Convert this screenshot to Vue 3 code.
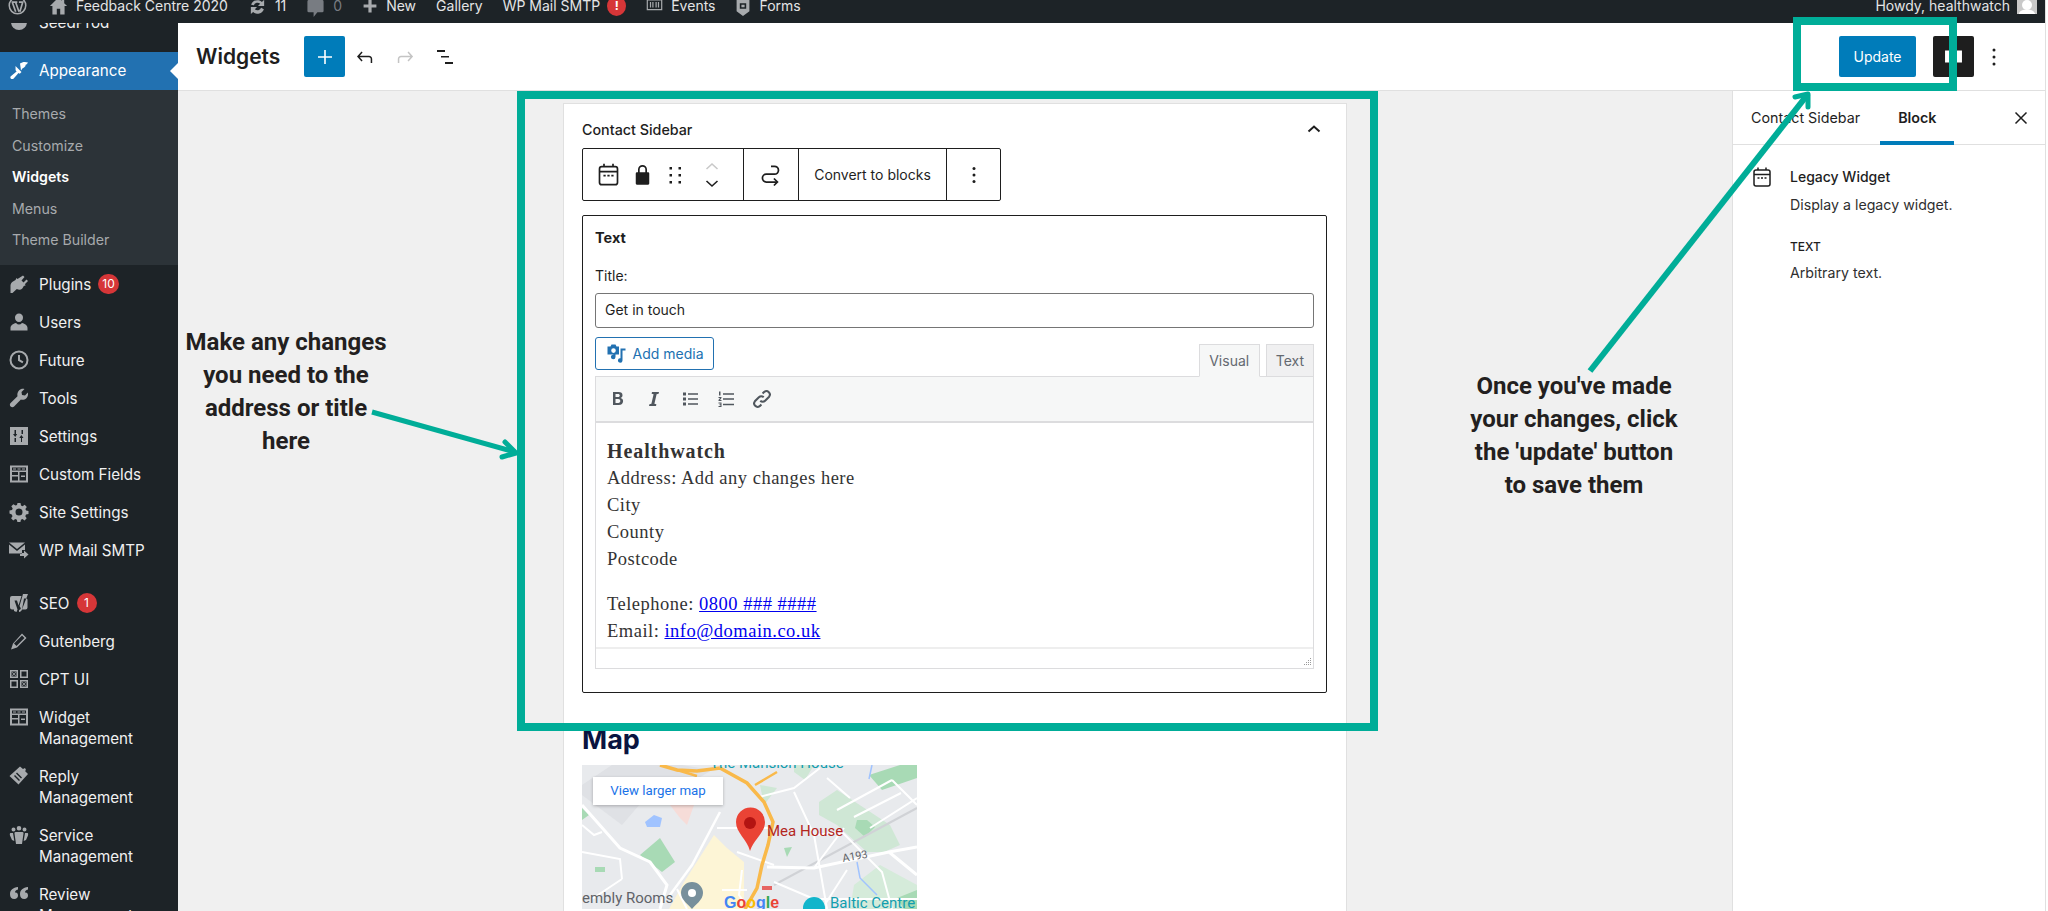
<template>
  <div class="page">
    <!-- 顶部管理栏 -->
    <header class="adminbar">
      <svg class="wp-logo" viewBox="0 0 20 20" fill="none" stroke="#a7aaad"><circle cx="10" cy="10" r="8.7" stroke-width="1.600" /><path d="M4.500 6.500l3.600 10M8 6.500l3.600 10M11.500 6.500h4l-3 10M3.800 6.500h6" stroke-width="1.800" /></svg>
      <div class="bar-item">
        <svg class="bar-ico home" viewBox="0 0 20 20"><path d="M10 1L1 10h2.600v9h4.600v-6h3.600v6h4.600v-9H19l-3-3V2.500h-2.600v2z" /></svg>
        <span>Feedback Centre 2020</span>
      </div>
      <div class="bar-item">
        <svg class="bar-ico sync" viewBox="0 0 20 20"><path d="M10.200 3.300c1.700 0 3.300.7 4.400 1.900L17 3v6.500h-6.500l2.300-2.300a4 4 0 0 0-6.600 1.500L3.300 8.200a7 7 0 0 1 6.900-4.900zM3 10.500h6.500l-2.300 2.300a4 4 0 0 0 6.600-1.500l2.900 1.500a7 7 0 0 1-11.300 3L3 17.800z" /></svg>
        <span>11</span>
      </div>
      <div class="bar-item muted">
        <svg class="bar-ico comment" viewBox="0 0 20 20"><path d="M3 1h14a1.500 1.500 0 0 1 1.500 1.500v10A1.500 1.500 0 0 1 17 14h-5l-4 5v-5H3a1.500 1.500 0 0 1-1.500-1.500v-10A1.500 1.500 0 0 1 3 1z" /></svg>
        <span>0</span>
      </div>
      <div class="bar-item">
        <svg class="bar-ico plus" viewBox="0 0 20 20"><path d="M8 2h4v6h6v4h-6v6H8v-6H2V8h6z" /></svg>
        <span>New</span>
      </div>
      <div class="bar-item"><span>Gallery</span></div>
      <div class="bar-item">
        <span>WP Mail SMTP</span>
        <b class="bar-alert">!</b>
      </div>
      <div class="bar-item">
        <svg class="bar-ico events" viewBox="0 0 20 20" fill="none" stroke="#a7aaad" stroke-width="1.500"><path d="M1 2.500h18v12H1zM5 5v7M8 5v7M12 5v7M15 5v7" /></svg>
        <span>Events</span>
      </div>
      <div class="bar-item">
        <svg class="bar-ico forms" viewBox="0 0 20 20"><path fill-rule="evenodd" d="M2 0h16v14l-8 6-8-6zM6 4v7h8V4zm2 2h4v3H8z" /></svg>
        <span>Forms</span>
      </div>
      <div class="howdy">
        <span>Howdy, healthwatch</span>
        <svg class="avatar" viewBox="0 0 20 14"><rect width="20" height="14" fill="#c9c9c9" /><circle cx="10" cy="5" r="5" fill="#fff" /><path d="M1.500 16c0-5 4-6.500 8.500-6.500s8.500 1.500 8.500 6.500z" fill="#fff" /></svg>
      </div>
    </header>

    <div class="main">
      <!-- 左侧菜单 -->
      <aside class="sidebar">
        <div class="menu-row seed">
          <svg class="menu-ico" viewBox="0 0 20 20"><circle cx="10" cy="10" r="8" /></svg>
          <span>SeedProd</span>
        </div>
        <div class="menu-row current">
          <svg class="menu-ico" viewBox="0 0 20 20"><path :d="icons.brush" /></svg>
          <span>Appearance</span>
        </div>
        <div class="submenu">
          <div v-for="s in subItems" :key="s" class="sub-row" :class="{ on: s === 'Widgets' }">{{ s }}</div>
        </div>
        <template v-for="m in menu" :key="m.label">
          <div class="menu-row" :class="{ spaced: m.spaced }">
            <svg class="menu-ico" viewBox="0 0 20 20"><path fill-rule="evenodd" :d="icons[m.icon]" /></svg>
            <span class="menu-label">{{ m.label }}<b v-if="m.badge" class="badge">{{ m.badge }}</b></span>
          </div>
        </template>
      </aside>

      <div class="editor">
        <!-- 编辑器顶栏 -->
        <div class="topbar">
          <h1 class="page-title">Widgets</h1>
          <button class="add-btn">
            <svg viewBox="0 0 24 24" width="24" height="24"><path d="M11.200 5h1.600v6.200H19v1.600h-6.200V19h-1.600v-6.200H5v-1.600h6.200z" fill="#fff" /></svg>
          </button>
          <svg class="tool undo" viewBox="0 0 24 24"><path d="M18.300 11.700c-.6-.6-1.400-.9-2.300-.9H6.700l2.900-3.300-1.100-1-4.500 5 4.500 5 1.100-1-2.900-3.300H16c.5 0 .9.200 1.200.5.300.3.500.7.500 1.200V18h1.500v-4c0-.9-.3-1.700-.9-2.300z" fill="#1e1e1e" /></svg>
          <svg class="tool redo" viewBox="0 0 24 24"><path d="M15.600 6.500l-1.100 1 2.900 3.300H8c-.9 0-1.700.3-2.300.9-.6.6-.9 1.400-.9 2.300v4h1.500v-4c0-.5.200-.9.500-1.200.3-.3.700-.5 1.200-.5h9.400l-2.900 3.300 1.100 1 4.500-5z" fill="#c4c4c4" /></svg>
          <svg class="tool list" viewBox="0 0 24 24"><path d="M4 5h8v2H4zM8 11h8v1.500H8zM12 17h8v2h-8z" fill="#1e1e1e" /></svg>
          <div class="top-right">
            <button class="update-btn">Update</button>
            <button class="settings-btn">
              <svg viewBox="0 0 24 24" width="29" height="29"><path d="M5 7h4l1 2h4l1-2h4v10h-4l-1-2h-4l-1 2H5z" fill="#fff" /></svg>
            </button>
            <svg class="tool kebab" viewBox="0 0 24 24" fill="#1e1e1e"><circle cx="12" cy="5" r="1.500" /><circle cx="12" cy="12" r="1.500" /><circle cx="12" cy="19" r="1.500" /></svg>
          </div>
        </div>

        <div class="workspace">
          <div class="canvas">
            <div class="card">
              <div class="area-head">
                <span>Contact Sidebar</span>
                <svg viewBox="0 0 24 24" width="24" height="24" fill="none" stroke="#1e1e1e" stroke-width="2"><path d="M6.500 14.500L12 9.500l5.500 5" /></svg>
              </div>

              <!-- 块工具栏 -->
              <div class="block-toolbar">
                <div class="tb-group first">
                  <svg class="tb-ico" viewBox="0 0 24 24" fill="none" stroke="#1e1e1e" stroke-width="1.500"><rect x="4" y="5" width="16" height="16" rx="2" /><path d="M4 9.500h16M8 2.500V5M16 2.500V5" /><path d="M7.500 13h2M11 13h2M14.500 13h2" /></svg>
                  <svg class="tb-ico lock" viewBox="0 0 24 24"><path d="M17 10h-1V7.500a4 4 0 0 0-8 0V10H7a1 1 0 0 0-1 1v9a1 1 0 0 0 1 1h10a1 1 0 0 0 1-1v-9a1 1 0 0 0-1-1zm-7.500-2.500a2.500 2.500 0 0 1 5 0V10h-5z" fill="#1e1e1e" /></svg>
                  <svg class="drag" viewBox="0 0 12 18" width="12" height="18" fill="#1e1e1e"><rect x="0.500" y="1" width="2.500" height="2.500" /><rect x="9.500" y="1" width="2.500" height="2.500" /><rect x="0.500" y="8" width="2.500" height="2.500" /><rect x="9.500" y="8" width="2.500" height="2.500" /><rect x="0.500" y="15" width="2.500" height="2.500" /><rect x="9.500" y="15" width="2.500" height="2.500" /></svg>
                  <div class="movers">
                    <svg viewBox="0 0 14 8" width="14" height="8" fill="none" stroke="#c9c9c9" stroke-width="1.600"><path d="M1.500 7L7 2l5.500 5" /></svg>
                    <svg viewBox="0 0 14 8" width="14" height="8" fill="none" stroke="#1e1e1e" stroke-width="1.600"><path d="M1.500 1L7 6l5.500-5" /></svg>
                  </div>
                </div>
                <div class="tb-group transform">
                  <svg viewBox="0 0 24 24" width="28" height="28" fill="none" stroke="#1e1e1e" stroke-width="1.500"><path d="M12 4.500h3a3.200 3.200 0 0 1 0 6.800H8a3.200 3.200 0 0 0 0 6.700h9" /><path d="M14.500 15l3 3-3 3" /></svg>
                </div>
                <div class="tb-group convert">Convert to blocks</div>
                <div class="tb-group more">
                  <svg viewBox="0 0 24 24" width="24" height="24" fill="#1e1e1e"><circle cx="12" cy="5.500" r="1.500" /><circle cx="12" cy="12" r="1.500" /><circle cx="12" cy="18.500" r="1.500" /></svg>
                </div>
              </div>

              <!-- 旧版文本小工具 -->
              <div class="widget-box">
                <div class="widget-name">Text</div>
                <label class="field-label">Title:</label>
                <div class="title-input">Get in touch</div>
                <div class="media-row">
                  <button class="media-btn">
                    <svg viewBox="0 0 20 20" width="20" height="20" fill="#2271b1"><path fill-rule="evenodd" d="M1.500 2.500h3l1-2h4l1 2h2.500v8H9.500v2.500a2.300 2.300 0 1 1-2-2.300V10.500h-6zm6 1.800a2.300 2.300 0 1 0 0 4.600 2.300 2.300 0 0 0 0-4.600z" /><path d="M14.500 4.500h5v2h-3v10a2.300 2.300 0 1 1-2-2.300z" /></svg>
                    Add media
                  </button>
                  <div class="tabs">
                    <div class="tab active">Visual</div>
                    <div class="tab">Text</div>
                  </div>
                </div>
                <div class="mce">
                  <div class="mce-toolbar">
                    <svg viewBox="0 0 20 20" class="mce-ico"><path d="M5 3h5.500c2.700 0 4 1.200 4 3.200 0 1.300-.7 2.300-1.900 2.700 1.500.3 2.500 1.500 2.500 3 0 2.300-1.500 4.100-4.500 4.100H5zm2.500 2.100v3H10c1.200 0 1.800-.6 1.800-1.500S11.200 5.100 10 5.100zm0 5v3.800h2.800c1.400 0 2-.8 2-1.900s-.7-1.900-2.100-1.900z" fill="#50575e" /></svg>
                    <svg viewBox="0 0 20 20" class="mce-ico"><path d="M8 3h7l-.4 1.800-2 .4-2.200 9.600 2 .4L12 17H5l.4-1.800 2-.4 2.200-9.600-2-.4z" fill="#50575e" /></svg>
                    <svg viewBox="0 0 20 20" class="mce-ico"><path d="M3 3.500h3v3H3zM8 4.300h10v1.400H8zM3 8.500h3v3H3zM8 9.300h10v1.400H8zM3 13.500h3v3H3zM8 14.300h10v1.400H8z" fill="#50575e" /></svg>
                    <svg viewBox="0 0 20 20" class="mce-ico"><path d="M3 2.500h1.500v4H3zM7 4.300h11v1.400H7zM2.500 8h3v1l-1.500 2h1.500v1h-3v-1L4 9H2.500zM7 9.300h11v1.400H7zM2.500 13.500h3v4.500h-3v-1h2v-.8h-1v-.9h1v-.8h-2zM7 14.800h11v1.400H7z" fill="#50575e" /></svg>
                    <svg viewBox="0 0 20 20" class="mce-ico link" fill="none" stroke="#50575e" stroke-width="1.800"><path d="M8.500 11.500a3 3 0 0 0 4.200 0l3.500-3.500a3 3 0 0 0-4.200-4.200L10.500 5.300" /><path d="M11.500 8.500a3 3 0 0 0-4.200 0l-3.500 3.500a3 3 0 0 0 4.200 4.200l1.500-1.500" /></svg>
                  </div>
                  <div class="mce-body">
                    <p><strong>Healthwatch</strong></p>
                    <p>Address: Add any changes here</p>
                    <p>City</p>
                    <p>County</p>
                    <p>Postcode</p>
                    <p class="gap">Telephone: <a href="#">0800 ### ####</a></p>
                    <p>Email: <a href="#">info@domain.co.uk</a></p>
                  </div>
                  <div class="mce-status">
                    <svg viewBox="0 0 10 10" width="10" height="10" fill="#9a9a9a"><path d="M8 1h1v1H8zM6 3h1v1H6zM8 3h1v1H8zM4 5h1v1H4zM6 5h1v1H6zM8 5h1v1H8zM2 7h1v1H2zM4 7h1v1H4zM6 7h1v1H6zM8 7h1v1H8z" /></svg>
                  </div>
                </div>
              </div>

              <h2 class="map-title">Map</h2>
              <!-- 地图 -->
              <div class="map">
                <svg viewBox="0 0 335 144" width="335" height="144">
                  <rect width="335" height="144" fill="#e8eaed" />
                  <path d="M132 70L102 117 87 144H162V97L145 83z" fill="#fdf5d6" />
                  <path d="M40 60L70 25 105 20 130 5 100 0H30L0 20V30z" fill="#dfe1e5" />
                  <path d="M237 37L255 25 308 60 318 80 302 87 285 87 255 60 237 50z" fill="#cfe7d5" />
                  <path d="M272 120L298 100 335 120V144H268z" fill="#d5ebda" />
                  <path d="M287 10L318 0h17v13l-35 12z" fill="#a8dab5" />
                  <path d="M212 0h20l-9 15-11-8z" fill="#cfe7d5" />
                  <path d="M178 20l17 3-13 17z" fill="#cfe7d5" />
                  <path d="M58 90L78 73 93 97 80 107z" fill="#a8dab5" />
                  <path d="M0 43l7 7-7 5z" fill="#a8dab5" />
                  <path d="M13 102h10v5H13z" fill="#a8dab5" />
                  <path d="M202 83l8-1-5 10z" fill="#a8dab5" />
                  <path d="M275 55h10l8 7-10 10-10-9z" fill="#a8dab5" />
                  <path d="M315 133l20-8v19h-13z" fill="#a8dab5" />
                  <path d="M63 57l9-7 8 3-2 9H65z" fill="#a0c3ff" />
                  <path d="M88 40h24l-7 20-7-7z" fill="#f6dcd8" />
                  <path d="M275 97l3 16 17 17M290 0l-3 14" fill="none" stroke="#a0c3ff" stroke-width="1.500" />
                  <path d="M192 120L335 43" fill="none" stroke="#d0d2d6" stroke-width="2" />
                  <g fill="none" stroke="#fff" stroke-width="2">
                    <path d="M0 40l38 43 30 14 17 23-7 24" stroke-width="3" />
                    <path d="M138 47l-28 53-22 30" stroke-width="2.500" />
                    <path d="M135 63h52M177 32l35-9 26-20M212 27l20 43 13 74" />
                    <path d="M185 102l47 1 75-16 28-5M307 87l28 23" stroke-width="3" />
                    <path d="M255 45l55-30M272 52l47-24M288 63l47-30M245 13l23 20M310 15l25 25" />
                    <path d="M155 87l37 13M192 117l40 17h103M160 105l-3 25 10 14M140 125h25" />
                    <path d="M0 87l38 7 2 20M40 114l-30 20M0 60l12 10 8-3M105 144l-10-20" />
                    <path d="M232 70l28-3 40 40 10 37M265 105l-25 39M232 103l30-40" />
                  </g>
                  <path d="M78 0l17 5 20 1 23-3 27 15 17 19 9 20-5 23-6 20-5 23-12 21" fill="none" stroke="#f9b94a" stroke-width="3.500" />
                  <path d="M173 20l22-13M95 5l20 6" fill="none" stroke="#f9b94a" stroke-width="2.500" />
                  <text x="128" y="3" class="m-teal">The Mansion House</text>
                  <path d="M168 86c-3-12-14-18-14-29a14.500 14.500 0 0 1 29 0c0 11-11 17-15 29z" fill="#ea4335" />
                  <circle cx="168" cy="58" r="6" fill="#b31412" />
                  <text x="185" y="71" class="m-red">Mea House</text>
                  <text x="260" y="95" class="m-road" transform="rotate(-10 272 91)">A193</text>
                  <text x="0" y="138" class="m-grey">embly Rooms</text>
                  <path d="M110 144c-3-4-11-9-11-16a11 11 0 0 1 22 0c0 7-8 12-11 16z" fill="#78909c" />
                  <circle cx="110" cy="128" r="4" fill="#fff" />
                  <text x="142" y="143" class="m-google"><tspan fill="#4285f4">G</tspan><tspan fill="#ea4335">o</tspan><tspan fill="#fbbc05">o</tspan><tspan fill="#4285f4">g</tspan><tspan fill="#34a853">l</tspan><tspan fill="#ea4335">e</tspan></text>
                  <path d="M180 122h10M180 124h10" stroke="#e53935" stroke-width="1.500" />
                  <circle cx="232" cy="143" r="11" fill="#12b5cb" />
                  <text x="248" y="143" class="m-baltic">Baltic Centre</text>
                </svg>
                <div class="map-link">View larger map</div>
              </div>
            </div>
          </div>

          <!-- 右侧面板 -->
          <aside class="inspector">
            <div class="ins-tabs">
              <div class="ins-tab">Contact Sidebar</div>
              <div class="ins-tab selected">Block</div>
              <svg class="ins-close" viewBox="0 0 24 24" width="24" height="24" fill="none" stroke="#1e1e1e" stroke-width="1.500"><path d="M6.500 6.500l11 11M17.500 6.500l-11 11" /></svg>
            </div>
            <div class="ins-body">
              <svg class="ins-ico" viewBox="0 0 24 24" fill="none" stroke="#1e1e1e" stroke-width="1.500"><rect x="4" y="5" width="16" height="16" rx="2" /><path d="M4 9.500h16M8 2.500V5M16 2.500V5" /><path d="M7.500 13h2M11 13h2M14.500 13h2" /></svg>
              <div class="ins-text">
                <div class="ins-title">Legacy Widget</div>
                <div class="ins-desc">Display a legacy widget.</div>
                <div class="ins-caps">TEXT</div>
                <div class="ins-desc">Arbitrary text.</div>
              </div>
            </div>
          </aside>
        </div>
      </div>
    </div>

    <!-- 标注层 -->
    <svg class="marks" viewBox="0 0 2048 911" fill="none" stroke="#00ad98" stroke-width="8">
      <rect x="521" y="95" width="853" height="632" />
      <rect x="1797" y="21" width="156" height="66" />
      <path d="M372 412L515 452" stroke-width="5" />
      <path d="M505 442l11 11-14 4" stroke-width="5" stroke-linecap="round" stroke-linejoin="round" />
      <path d="M1590 371L1808 94" stroke-width="6" />
      <path d="M1795 97l13-3 0 13" stroke-width="5" stroke-linecap="round" stroke-linejoin="round" />
    </svg>
    <div class="note note-left">Make any changes<br />you need to the<br />address or title<br />here</div>
    <div class="note note-right">Once you've made<br />your changes, click<br />the 'update' button<br />to save them</div>
  </div>
</template>

<script setup>
// 左侧子菜单
const subItems = ['Themes', 'Customize', 'Widgets', 'Menus', 'Theme Builder']

// 左侧主菜单
const menu = [
  { label: 'Plugins', icon: 'plug', badge: '10' },
  { label: 'Users', icon: 'user' },
  { label: 'Future', icon: 'clock' },
  { label: 'Tools', icon: 'wrench' },
  { label: 'Settings', icon: 'sliders' },
  { label: 'Custom Fields', icon: 'table' },
  { label: 'Site Settings', icon: 'gear' },
  { label: 'WP Mail SMTP', icon: 'mail' },
  { label: 'SEO', icon: 'yoast', badge: '1', spaced: true },
  { label: 'Gutenberg', icon: 'pencil' },
  { label: 'CPT UI', icon: 'squares' },
  { label: 'Widget Management', icon: 'table' },
  { label: 'Reply Management', icon: 'tag' },
  { label: 'Service Management', icon: 'group' },
  { label: 'Review Management', icon: 'quote' }
]

const icons = {
  brush: 'M11 3.500c2-1.500 5-2 8-1l-1.200 1.700c-1 .2-1.500.8-1.300 1.800l-1.700 1.700c-.8 0-1.300.3-1.500 1L12 10.500zM6.500 6l6 6-1.700 1.800-1.300-.8-4.800 5.500c-.8.8-2.300.8-3-.1-.6-.8-.4-1.800.4-2.400l5.500-4.500-1-1.200z',
  plug: 'M14 1.500l1.500 1.500-3 3.500 2 2 3-3 1.500 1.500-3.200 3.200 1 1-2 .8-1.500 2.500c-1.500 1.500-3.500 1.500-5.500.5L3.500 19H1.500v-7.500c0-1.500 1-3 2.500-4l2.500-1.500 1-2 1 1z',
  user: 'M10 1.500a4 4 0 0 1 4 4.200c0 2.300-1.800 4.300-4 4.300S6 8 6 5.700a4 4 0 0 1 4-4.200zM7 11c1 1 2 1.500 3 1.500s2-.5 3-1.500c3 .5 5.500 2.500 5.500 5v2.500h-17V16c0-2.500 2.500-4.500 5.500-5z',
  clock: 'M10 .5a9.500 9.500 0 1 1 0 19 9.500 9.500 0 0 1 0-19zm0 2a7.500 7.500 0 1 0 0 15 7.500 7.500 0 0 0 0-15zM9 5h2v4.600l3.400 2-1 1.600L9 10.800z',
  wrench: 'M18.800 4.500c.6 2 .1 4.200-1.400 5.700-1.500 1.400-3.600 1.900-5.500 1.400l-6.800 6.900c-1 1-2.500 1-3.500 0s-1-2.500 0-3.500l6.900-6.800C8 6 8.500 3.900 10 2.400c1.400-1.400 3.600-2 5.500-1.400l-3 3 .5 3 3 .5z',
  sliders: 'M1 1h18v18H1zM5.500 4v4H4l2.200 3 2-3H7V4zM13 16v-4h1.500l-2.200-3-2 3H12v4zM5.500 12v4H7v-4zM12.500 4v4H14V4z',
  table: 'M1 1.500h18v17H1zM3 3.500v3h14v-3zM4 4.400h3v1.200H4zM8.500 4.400h3v1.200h-3zM13 4.400h3v1.200h-3zM3 8v3h6V8zM3 12.500v4h6v-4zM10.500 8v8.500H17V8zM12 11.500h4v1.500h-4z',
  gear: 'M8.500 1h3l.5 2.500 1.600.7 2.100-1.400 2.100 2.100-1.400 2.100.7 1.600 2.400.5v3l-2.500.5-.7 1.600 1.400 2.100-2.100 2.100-2.100-1.400-1.600.7-.5 2.500h-3l-.5-2.500-1.600-.7-2.100 1.400-2.100-2.100 1.400-2.100-.7-1.600L.5 11.500v-3L3 8l.7-1.600-1.400-2.100 2.100-2.100 2.100 1.400L8 3zM10 6.500a3.500 3.500 0 1 0 0 7 3.500 3.500 0 0 0 0-7z',
  mail: 'M0 2.500h16L8 9zM0 4.500l8 6.500 8-6.500V10h-3v3.500H0zM15 10.500l4.500 4-4.500 4v-2.500h-4v-3h4z',
  yoast: 'M3 3h9.500l-3 9.500L8 7.500H5.500l3 9L7.500 19 5 18v-1.500H3a2 2 0 0 1-2-2V5a2 2 0 0 1 2-2zM14 1h5l-6 15.500c-.5 1.200-1.500 2.500-3 2.500v-2c1 0 1.500-.7 1.800-1.700L10.500 13zM15 5.500h2.500a1.500 1.500 0 0 1 1 1.500v7.500a2 2 0 0 1-2 2H13z',
  pencil: 'M13 2.500l4.500 4.500L8 16.500l-6 2 2-6zM5 12.500l2.500 2.500 8-8L13 4.500z',
  squares: 'M1 1h8v8H1zM2.500 2.500v5h5v-5zM3.500 3l1.500 1.500L6.500 3l.5.500L5.500 5 7 6.500l-.5.500L5 5.500 3.500 7 3 6.500 4.500 5 3 3.500zM11 1h8v8h-8zM12.500 2.500v5h5v-5zM1 11h8v8H1zM2.500 12.500v5h5v-5zM11 11h8v8h-8zM12.500 12.500v5h5v-5zM13.500 13l1.500 1.500 1.500-1.500.5.500L15.500 15l1.500 1.500-.5.500-1.500-1.500-1.500 1.500-.5-.500 1.500-1.500-1.500-1.500z',
  tag: 'M11 .5l3 2.500 2-1 1 2-1 1 3 3-9.500 10.500L.5 10zM8 6.500L7 7.500l5 5 1-1zM6 9L5 10l5 5 1-1z',
  group: 'M10 1a2.300 2.300 0 1 1 0 4.600A2.300 2.300 0 0 1 10 1zM4.500 2.500a2 2 0 1 1 0 4 2 2 0 0 1 0-4zM15.500 2.500a2 2 0 1 1 0 4 2 2 0 0 1 0-4zM6.500 7h7c.8 0 1.200.8 1 1.500L13 19H7L5.500 8.500C5.300 7.800 5.700 7 6.500 7zM1.500 8H4l1.300 8L3 15 1 10.500C.7 9.300.8 8.200 1.500 8zM16 8h2.500c.7.200.8 1.300.5 2.500L17 15l-2.300 1z',
  quote: 'M9 3v2.500C6.800 6 6 7 6 8.500c.2-.1.500-.1.800-.1C8 8.400 9 9.500 9 11.500 9 13.500 7.500 15 5.300 15 2.500 15 1 13 1 10.200 1 6 4 3.500 9 3zM19 3v2.500C16.800 6 16 7 16 8.500c.2-.1.500-.1.800-.1 1.200 0 2.200 1.100 2.200 3.100 0 2-1.500 3.500-3.700 3.500-2.800 0-4.300-2-4.300-4.800C11 6 14 3.500 19 3z'
}
</script>

<style scoped>
.page {
  position: relative;
  width: 2045px;
  height: 911px;
  overflow: hidden;
  font-family: Inter, 'Liberation Sans', sans-serif;
  color: #1e1e1e;
  border-right: 1px solid #e0e0e0;
}

/* 管理栏 */
.adminbar {
  height: 23px;
  background: #1d2327;
  color: #e4e5e6;
  display: flex;
  align-items: flex-start;
  gap: 20px;
  padding: 0 8px;
  font-size: 14px;
  line-height: 12px;
}

.wp-logo {
  width: 19px;
  height: 19px;
  margin-top: -4px;
  margin-right: 2px;
}

.bar-item {
  display: flex;
  align-items: center;
  height: 12px;
  gap: 8px;
  white-space: nowrap;
}

.bar-item.muted span {
  color: #787c82;
}

.bar-ico {
  height: 16px;
  width: 16px;
  fill: #a7aaad;
  flex-shrink: 0;
}

.home {
  height: 20px;
  width: 19px;
}

.sync {
  width: 19px;
  height: 19px;
}

.comment {
  fill: #787c82;
  width: 19px;
  height: 19px;
  margin-top: 4px;
}

.events {
  fill: none;
  width: 17px;
}

.forms {
  height: 16px;
  margin-top: 4px;
}

.bar-alert {
  width: 19px;
  height: 20px;
  margin-left: -1px;
  border-radius: 50%;
  background: #d63638;
  color: #fff;
  font-size: 12px;
  line-height: 20px;
  text-align: center;
}

.howdy {
  margin-left: auto;
  display: flex;
  gap: 7px;
  white-space: nowrap;
}

.avatar {
  width: 20px;
  height: 14px;
}

.main {
  display: flex;
  height: 888px;
}

/* 左侧菜单 */
.sidebar {
  width: 178px;
  flex-shrink: 0;
  background: #1d2327;
  color: #f0f0f1;
  font-size: 15.200px;
  line-height: 21px;
  overflow: hidden;
}

.menu-row {
  position: relative;
  display: flex;
  padding: 8.500px 0;
  min-height: 38px;
  box-sizing: border-box;
}

.menu-row.spaced {
  margin-top: 15px;
}

.seed {
  margin-top: -20px;
  margin-bottom: 11px;
}

.current {
  background: #2271b1;
  color: #fff;
  padding: 8px 0 9px;
}

.current::after {
  content: '';
  position: absolute;
  right: 0;
  top: 11px;
  border: 8px solid transparent;
  border-right-color: #fff;
  border-left-width: 0;
}

.current .menu-ico {
  fill: #fff;
}

.menu-ico {
  width: 20px;
  height: 20px;
  margin-left: 9px;
  margin-right: 10px;
  flex-shrink: 0;
  fill: #a7aaad;
}

.menu-label {
  width: 125px;
}

.badge {
  display: inline-block;
  min-width: 20px;
  height: 20px;
  margin-left: 7px;
  padding: 0 4px;
  box-sizing: border-box;
  border-radius: 10px;
  background: #d63638;
  color: #fff;
  font-size: 12px;
  font-weight: 400;
  line-height: 20px;
  text-align: center;
  vertical-align: top;
}

.submenu {
  background: #2c3338;
  padding: 8px 0 9.500px;
  height: 175px;
  box-sizing: border-box;
  color: #a7aaad;
  font-size: 14.200px;
}

.sub-row {
  height: 31.500px;
  line-height: 31.500px;
  padding-left: 12px;
}

.sub-row.on {
  color: #fff;
  font-weight: 600;
}

.editor {
  flex: 1;
  min-width: 0;
  display: flex;
  flex-direction: column;
}

/* 顶栏 */
.topbar {
  height: 68px;
  box-sizing: border-box;
  display: flex;
  align-items: center;
  background: #fff;
  border-bottom: 1px solid #e0e0e0;
  padding: 0 39px 0 18px;
}

.page-title {
  margin: 0 22px 0 0;
  font-size: 21px;
  font-weight: 600;
  width: 86px;
}

.add-btn {
  width: 41px;
  height: 41px;
  border: 0;
  padding: 0;
  border-radius: 2px;
  background: #007cba;
  display: flex;
  align-items: center;
  justify-content: center;
}

.tool {
  width: 24px;
  height: 24px;
}

.undo {
  margin-left: 8px;
}

.redo,
.list {
  margin-left: 16px;
}

.top-right {
  margin-left: auto;
  display: flex;
  align-items: center;
}

.update-btn {
  width: 77px;
  height: 41px;
  border: 0;
  border-radius: 2px;
  background: #007cba;
  color: #fff;
  font: 14px Inter, sans-serif;
}

.settings-btn {
  width: 41px;
  height: 41px;
  margin-left: 17px;
  border: 0;
  border-radius: 2px;
  background: #1e1e1e;
  display: flex;
  align-items: center;
  justify-content: center;
  padding: 0;
}

.kebab {
  margin-left: 8px;
}

.workspace {
  flex: 1;
  display: flex;
  min-height: 0;
}

.canvas {
  flex: 1;
  background: #f0f0f0;
  padding-top: 12px;
  overflow: hidden;
}

.card {
  width: 784px;
  margin: 0 auto;
  height: 900px;
  box-sizing: border-box;
  background: #fff;
  border: 1px solid #e0e0e0;
  border-bottom: 0;
  padding: 0 18px;
}

.area-head {
  display: flex;
  justify-content: space-between;
  align-items: center;
  height: 44px;
  padding-top: 6px;
  box-sizing: border-box;
  font-size: 14.300px;
  font-weight: 500;
  margin-right: 2px;
}

/* 块工具栏 */
.block-toolbar {
  display: flex;
  width: 419px;
  height: 53px;
  box-sizing: border-box;
  border: 1.500px solid #1e1e1e;
  border-radius: 2px;
  font-size: 14px;
}

.tb-group {
  display: flex;
  align-items: center;
  justify-content: center;
  border-left: 1.500px solid #1e1e1e;
  box-sizing: border-box;
}

.first {
  width: 160px;
  border-left: 0;
  justify-content: flex-start;
  padding-left: 12px;
}

.transform {
  width: 55px;
}

.convert {
  width: 148px;
}

.more {
  flex: 1;
}

.tb-ico {
  width: 27px;
  height: 27px;
  flex-shrink: 0;
}

.lock {
  margin-left: 7px;
}

.drag {
  margin-left: 13px;
}

.movers {
  display: flex;
  flex-direction: column;
  gap: 10px;
  margin-left: 24px;
}

/* 小工具框 */
.widget-box {
  margin-top: 14px;
  width: 745px;
  height: 478px;
  box-sizing: border-box;
  border: 1.500px solid #1e1e1e;
  border-radius: 2px;
  padding: 0 12px;
}

.widget-name {
  margin-top: 12px;
  font-size: 14.500px;
  font-weight: 700;
  line-height: 20px;
}

.field-label {
  display: block;
  margin-top: 18px;
  font-size: 14px;
  line-height: 20px;
}

.title-input {
  margin-top: 7px;
  height: 35px;
  box-sizing: border-box;
  border: 1.500px solid #757575;
  border-radius: 3px;
  padding: 0 9px;
  font-size: 14px;
  line-height: 32px;
}

.media-row {
  display: flex;
  justify-content: space-between;
  align-items: flex-end;
  margin-top: 9px;
  height: 39px;
}

.media-btn {
  align-self: flex-start;
  width: 119px;
  height: 33px;
  box-sizing: border-box;
  display: flex;
  align-items: center;
  justify-content: center;
  gap: 7px;
  padding: 0;
  border: 1px solid #2271b1;
  border-radius: 3px;
  background: #fff;
  color: #2271b1;
  font: 14px Inter, sans-serif;
}

.tabs {
  display: flex;
  gap: 6px;
  margin-bottom: -1px;
}

.tab {
  height: 33px;
  box-sizing: border-box;
  border: 1px solid #dcdcde;
  background: #f0f0f1;
  color: #646970;
  font-size: 14px;
  line-height: 31px;
  padding: 0 9px;
}

.tab.active {
  background: #f6f7f7;
  border-bottom-color: #f6f7f7;
  position: relative;
  padding: 0;
  width: 61px;
  text-align: center;
}

.mce {
  border: 1px solid #dcdcde;
  height: 293px;
  box-sizing: border-box;
  display: flex;
  flex-direction: column;
}

.mce-toolbar {
  height: 46px;
  box-sizing: border-box;
  background: #f6f7f7;
  border-bottom: 2px solid #dcdcde;
  display: flex;
  align-items: center;
  padding-left: 12px;
  gap: 16px;
}

.mce-ico {
  width: 20px;
  height: 20px;
}

.mce-ico.link {
  transform: scale(1.150);
}

.mce-body {
  flex: 1;
  padding: 15px 11px 0;
  font-family: 'Liberation Serif', serif;
  font-size: 18.500px;
  letter-spacing: 0.500px;
  line-height: 27px;
  color: #333;
  overflow: hidden;
}

.mce-body p {
  margin: 0;
  height: 27px;
}

.mce-body strong {
  font-size: 20px;
  letter-spacing: 0.900px;
}

.mce-body .gap {
  margin-top: 18px;
}

.mce-body a {
  color: #0000ee;
}

.mce-status {
  height: 21px;
  box-sizing: border-box;
  border-top: 2px solid #eee;
  display: flex;
  justify-content: flex-end;
  align-items: flex-end;
  padding: 0 1px 1px 0;
}

.map-title {
  margin: 31px 0 0;
  color: #0a1440;
  font-size: 27px;
  font-weight: 700;
  line-height: 32px;
}

.map {
  position: relative;
  margin-top: 9px;
  width: 335px;
  height: 144px;
  overflow: hidden;
}

.map svg {
  display: block;
}

.map-link {
  position: absolute;
  left: 11px;
  top: 12px;
  width: 130px;
  height: 28px;
  background: #fff;
  box-shadow: 0 1px 3px rgba(0, 0, 0, 0.25);
  color: #1a73e8;
  font: 13.300px/28px Roboto, sans-serif;
  text-align: center;
}

.m-teal {
  font: 15px Roboto, sans-serif;
  fill: #129eaf;
}

.m-red {
  font: 15px Roboto, sans-serif;
  fill: #b3261e;
}

.m-road {
  font: 11px Roboto, sans-serif;
  fill: #5f6368;
}

.m-grey {
  font: 15px Roboto, sans-serif;
  fill: #5f6368;
}

.m-google {
  font: 700 16px 'Liberation Sans', sans-serif;
}

.m-baltic {
  font: 15px Roboto, sans-serif;
  fill: #129eaf;
}

/* 右侧面板 */
.inspector {
  width: 313px;
  flex-shrink: 0;
  box-sizing: border-box;
  background: #fff;
  border-left: 1px solid #e0e0e0;
}

.ins-tabs {
  position: relative;
  display: flex;
  height: 54px;
  box-sizing: border-box;
  border-bottom: 1px solid #e0e0e0;
  font-size: 14.300px;
  line-height: 53px;
  padding-left: 18px;
}

.ins-tab {
  color: #1e1e1e;
}

.ins-tab.selected {
  position: relative;
  margin-left: 20px;
  padding: 0 18px;
  font-weight: 600;
  box-shadow: inset 0 -4px 0 #007cba;
  height: 54px;
}

.ins-close {
  position: absolute;
  right: 12px;
  top: 15px;
}

.ins-body {
  display: flex;
  padding: 20px 0 0 20px;
  font-size: 14.200px;
}

.ins-ico {
  width: 24px;
  height: 24px;
  flex-shrink: 0;
  margin: 0 16px 0 -3px;
}

.ins-title {
  font-weight: 500;
  line-height: 24px;
  font-size: 14px;
}

.ins-desc {
  margin-top: 4px;
  line-height: 24px;
  color: #2f2f2f;
}

.ins-caps {
  margin-top: 20px;
  font-size: 12px;
  font-weight: 500;
  line-height: 20px;
}

/* 标注 */
.marks {
  position: absolute;
  left: 0;
  top: 0;
  width: 2048px;
  height: 911px;
}

.note {
  position: absolute;
  transform: translateX(-50%);
  font-family: Roboto, sans-serif;
  font-size: 24px;
  font-weight: 700;
  line-height: 33px;
  color: #231f20;
  text-align: center;
  white-space: nowrap;
}

.note-left {
  left: 286px;
  top: 326px;
}

.note-right {
  left: 1574px;
  top: 370px;
}
</style>

<style>
html,
body {
  margin: 0;
  background: #fff;
  overflow: hidden;
}
</style>
